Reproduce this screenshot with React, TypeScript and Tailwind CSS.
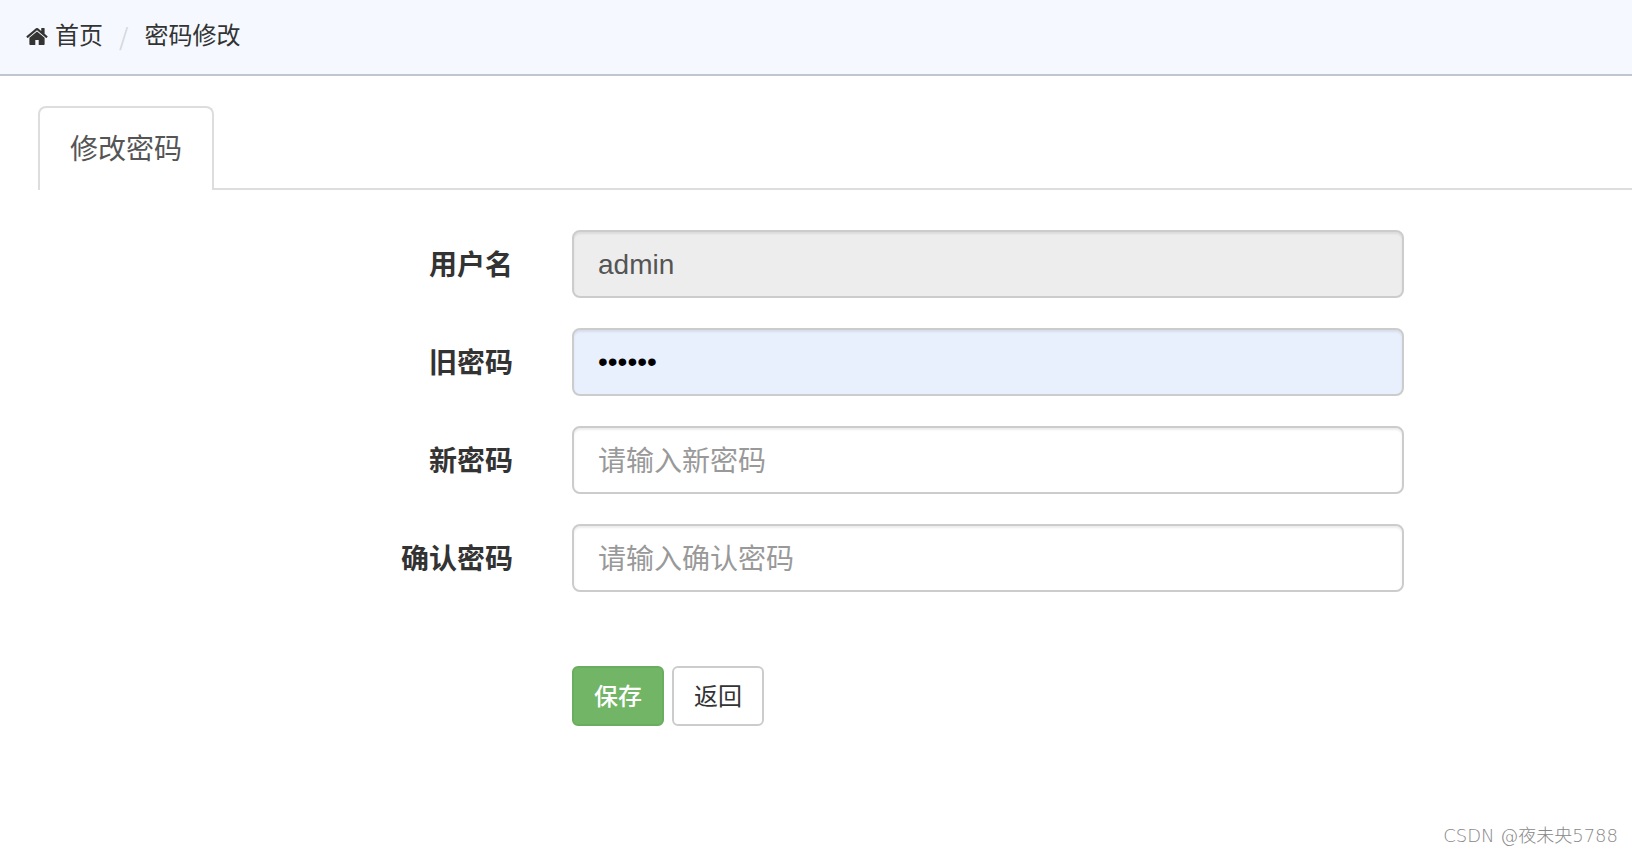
import { InputHTMLAttributes } from "react";

interface FormRowProps extends InputHTMLAttributes<HTMLInputElement> {
    id: string;
    label: string;
    inputClassName?: string;
}

const HomeIcon = () => (
    <svg viewBox="0 256 1664 1280" className="w-[22px] h-[17px] shrink-0" fill="currentColor" aria-hidden="true">
        <path d="M1408 992v480q0 26-19 45t-45 19h-384v-384h-256v384h-384q-26 0-45-19t-19-45v-480q0-1 .5-3t.5-3l575-474 575 474q1 2 1 6zm223-69l-62 74q-8 9-21 11h-3q-13 0-21-7l-692-577-692 577q-12 8-24 7-13-2-21-11l-62-74q-8-10-7-23.5t11-21.5l719-599q32-26 76-26t76 26l244 204v-195q0-14 9-23t23-9h192q14 0 23 9t9 23v408l219 182q10 8 11 21.5t-7 23.5z" />
    </svg>
);

const FormRow = ({ id, label, inputClassName = "bg-white text-[#555] pt-1", ...props }: FormRowProps) => {
    return (
        <div className="grid grid-cols-[143fr_208fr_57fr] items-center">
            <label htmlFor={id} className="pt-1 pr-[59px] text-right text-[28px] leading-10 font-bold">{label}</label>
            <input
                id={id}
                className={`w-full min-w-0 h-[68px] px-6 border-2 border-[#ccc] rounded-lg text-[28px] leading-10 shadow-[inset_0_2px_2px_rgba(0,0,0,0.075)] outline-none placeholder:text-[#999] ${inputClassName}`}
                {...props}
            />
        </div>
    );
};

const App = () => {
    return (
        <div className="min-h-screen flex flex-col bg-white text-[#333] font-['Liberation_Sans','Noto_Sans_CJK_SC',sans-serif]">
            <nav className="px-[26px] pt-4 pb-[18px] border-b-2 border-[#c0c5d2] bg-[#f5f9ff] text-2xl leading-10">
                <ol className="flex items-center">
                    <li>
                        <a href="#home" className="flex items-center gap-[7px]">
                            <HomeIcon />
                            首页
                        </a>
                    </li>
                    <li className="px-4 text-[#d5d8dc] font-['Noto_Sans_CJK_SC',sans-serif]" aria-hidden="true">/</li>
                    <li>密码修改</li>
                </ol>
            </nav>

            <main className="flex flex-col grow pt-[30px]">
                <div className="flex pl-[38px]">
                    <a href="#password" className="h-[84px] px-[30px] pt-[22px] border-2 border-b-0 border-[#ddd] rounded-t-lg text-[28px] leading-10 text-[#555]">修改密码</a>
                    <div className="grow border-b-2 border-[#ddd]"></div>
                </div>

                <form className="flex flex-col gap-[30px] pt-10" onSubmit={(e) => e.preventDefault()}>
                    <FormRow id="username" label="用户名" type="text" defaultValue="admin" readOnly inputClassName="bg-[#ededed] text-[#555] pt-0.5" />
                    <FormRow id="old-password" label="旧密码" type="password" defaultValue="123456" inputClassName="bg-[#e8f0fe] text-black" />
                    <FormRow id="new-password" label="新密码" type="password" placeholder="请输入新密码" />
                    <FormRow id="confirm-password" label="确认密码" type="password" placeholder="请输入确认密码" />

                    <div className="grid grid-cols-[143fr_208fr_57fr] pt-11">
                        <div className="col-start-2 flex gap-2 text-2xl leading-9">
                            <button type="submit" className="h-[60px] px-5 pt-0.5 border-2 border-[#69ae5e] rounded-md bg-[#72b566] text-white font-medium">保存</button>
                            <button type="button" className="h-[60px] px-5 pt-0.5 border-2 border-[#ccc] rounded-md bg-white">返回</button>
                        </div>
                    </div>
                </form>

                <footer className="mt-auto pr-[14px] pb-1 text-right text-lg leading-7 font-extralight text-[#888] font-['DejaVu_Sans','Noto_Sans_CJK_SC',sans-serif]">CSDN @夜未央5788</footer>
            </main>
        </div>
    );
};

export default App;
